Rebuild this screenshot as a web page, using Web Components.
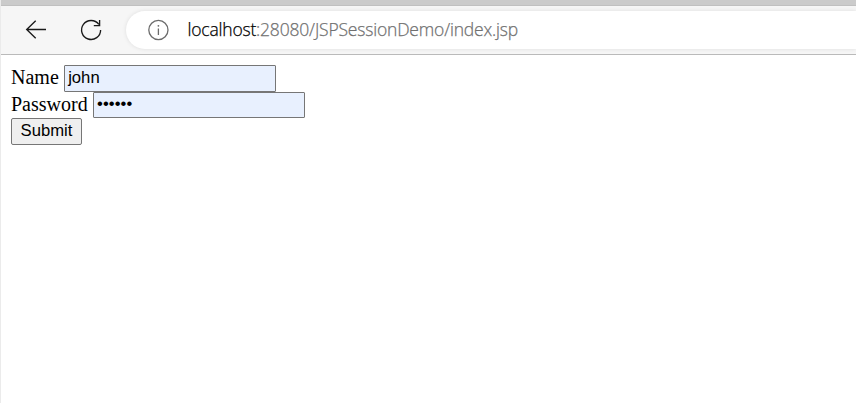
<!DOCTYPE html>
<html lang="en">
<head>
<meta charset="utf-8">
<title>index.jsp</title>
<style>
html,body{margin:0;height:100%;overflow:hidden;background:#fff}
</style>
</head>
<body>
<browser-window>
  <browser-toolbar slot="toolbar"><address-bar slot="address" host="localhost" path=":28080/JSPSessionDemo/index.jsp"></address-bar></browser-toolbar>
  <login-form>
    <form-field label="Name" value="john"></form-field>
    <form-field label="Password" value="••••••" secret></form-field>
    <submit-button>Submit</submit-button>
  </login-form>
</browser-window>
<script>
const define = (name, html, setup) => customElements.define(name, class extends HTMLElement {
  connectedCallback() {
    if (this.shadowRoot) return;
    const t = document.createElement('template');
    t.innerHTML = html;
    this.attachShadow({mode: 'open'}).append(t.content.cloneNode(true));
    if (setup) setup(this, this.shadowRoot);
  }
});

define('browser-window', `<style>
  :host{display:flex;flex-direction:column;box-sizing:border-box;height:100vh;border-left:1px solid #ebebeb;background:#fff}
  </style><slot name="toolbar"></slot><slot></slot>`);

define('browser-toolbar', `<style>
  :host{display:flex;flex:none;align-items:flex-start;box-sizing:border-box;height:55px;border-top:5px solid #cbcbcb;border-bottom:1px solid #bababa;background:#f6f6f6;box-shadow:inset 0 1px #c0c0c0}
  svg{flex:none;display:block;fill:none;stroke:#1a1a1a;stroke-width:1.35}
  .back{margin:13px 0 0 23px}
  .reload{margin:13px 0 0 31px}
  </style>
  <svg class="back" width="24" height="24" viewBox="0 0 24 24"><path d="M22 11.5H2.5M11.7 2.8L2.7 11.5L11.7 20.2"/></svg>
  <svg class="reload" width="24" height="24" viewBox="0 0 24 24"><path d="M21.6 11.9A9.5 9.5 0 1 1 19.8 6.4M20.6 2V7.6H14.8"/></svg>
  <slot name="address"></slot>`);

define('address-bar', `<style>
  :host{display:flex;flex:1;align-items:center;box-sizing:border-box;height:38px;margin:6px 0 0 23px;padding-left:21px;border-radius:19px 0 0 19px;background:#fff;box-shadow:0 0 4px rgba(0,0,0,.1);font:300 17.5px/24px "Open Sans","Noto Sans",sans-serif;white-space:nowrap}
  svg{flex:none;fill:none;stroke:#6b6b6b;stroke-width:1.3}
  .dot{fill:#6b6b6b;stroke:none}
  span{padding-bottom:2px;-webkit-text-stroke:.25px currentColor}
  .host{margin-left:18.5px;color:#000;letter-spacing:-.2px}
  .path{color:#707070;letter-spacing:-.18px}
  </style>
  <svg width="22" height="22" viewBox="0 0 22 22"><circle cx="11.4" cy="11" r="9.6"/><path d="M11.4 9.5V16"/><circle class="dot" cx="11.4" cy="6.8" r=".9"/></svg>
  <span class="host"></span><span class="path"></span>`, (el, root) => {
  root.querySelector('.host').textContent = el.getAttribute('host');
  root.querySelector('.path').textContent = el.getAttribute('path');
});

define('login-form', `<style>
  :host{display:flex;flex-direction:column;align-items:flex-start;padding:10px;color:#000;font:20px/24px "Liberation Serif",serif}
  </style><slot></slot>`);

define('form-field', `<style>
  :host{display:flex;align-items:flex-start;height:27px}
  :host([secret]){height:26px}
  span{white-space:pre}
  div{box-sizing:border-box;width:212px;height:100%;border:1px solid #767676;border-radius:1px;background:#e8f0fe;padding-left:3.4px;font:16.67px/23px "Liberation Sans",sans-serif}
  :host([secret]) div{letter-spacing:.05px;line-height:22px}
  </style><span></span><div></div>`, (el, root) => {
  root.querySelector('span').textContent = el.getAttribute('label') + ' ';
  root.querySelector('div').textContent = el.getAttribute('value');
});

define('submit-button', `<style>
  :host{display:flex;justify-content:center;box-sizing:border-box;width:71px;height:27px;border:1px solid #767676;border-radius:2px;background:#efefef;font:16.67px/24px "Liberation Sans",sans-serif}
  </style><slot></slot>`);
</script>
</body>
</html>
